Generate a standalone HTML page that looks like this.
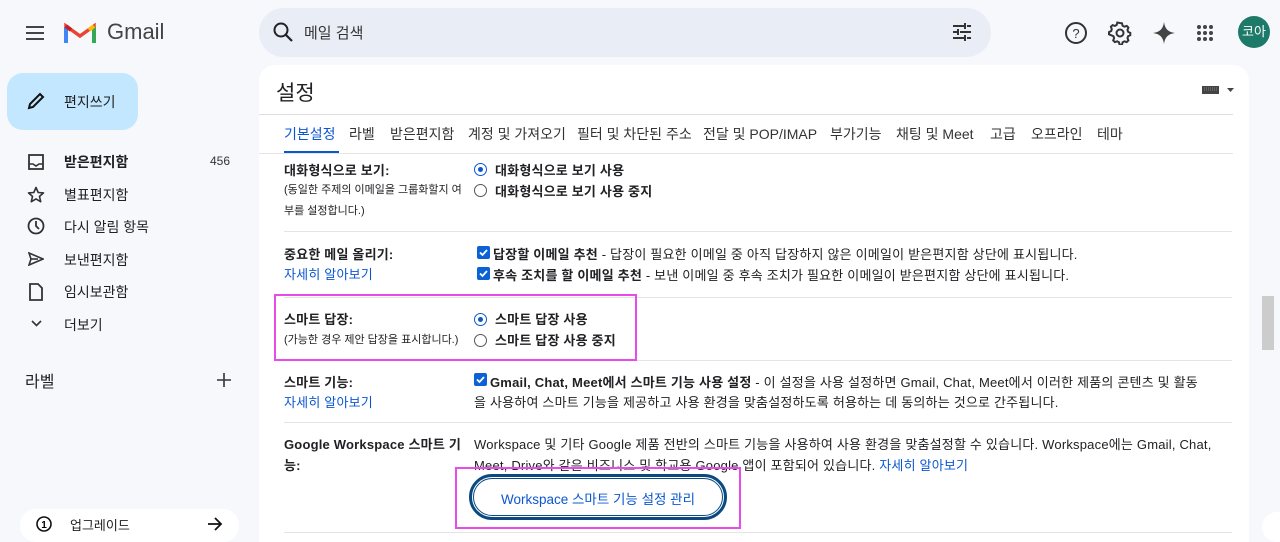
<!DOCTYPE html>
<html><head><meta charset="utf-8"><style>
*{box-sizing:border-box;margin:0;padding:0}
html,body{width:1280px;height:542px;overflow:hidden}
body{background:#f6f8fc;font-family:"Liberation Sans","Noto Sans CJK KR",sans-serif;color:#202124;position:relative}
.a{position:absolute;white-space:nowrap}
.nav{font-size:14px;color:#202124}
.card{position:absolute;left:259px;top:65px;width:990px;height:477px;background:#fff;border-radius:16px 16px 0 0}
.t{font-size:13px;color:#202124;letter-spacing:.2px}
.b{font-weight:bold}
.lnk{color:#0b57d0}
.sep{position:absolute;left:284px;width:948px;height:1px;background:#e4e4e4}
.rad{position:absolute;width:13px;height:13px;border-radius:50%;border:1px solid #555;background:#fff}
.rad.on{border:1.5px solid #0b57d0}
.rad.on::after{content:"";position:absolute;left:2.5px;top:2.5px;width:5px;height:5px;border-radius:50%;background:#0b57d0}
.cb{position:absolute;width:13px;height:13px;border-radius:2px;background:#0b62d6}
.cb svg{position:absolute;left:0;top:0}
.tab{position:absolute;top:124px;font-size:14px;color:#333;white-space:nowrap}
</style></head><body>
<svg class="a" style="left:25px;top:25px" width="20" height="16"><path d="M1 2h18M1 8h18M1 14h18" stroke="#444" stroke-width="2"/></svg>
<svg class="a" style="left:64px;top:21px" width="32" height="24" viewBox="0 0 32 24"><path d="M2 22V5l14 10L30 5v17" fill="none" stroke="#ea4335" stroke-width="3.5"/><path d="M2 22V6" stroke="#4285f4" stroke-width="4"/><path d="M30 22V6" stroke="#34a853" stroke-width="4"/><path d="M2 5l5 4" stroke="#c5221f" stroke-width="4"/><path d="M30 5l-5 4" stroke="#fbbc04" stroke-width="4"/></svg>
<div class="a" style="left:107px;top:19px;font-size:22px;color:#444">Gmail</div>
<div class="a" style="left:259px;top:8px;width:732px;height:49px;border-radius:25px;background:#e9eef6"></div>
<svg class="a" style="left:272px;top:21px" width="22" height="22"><circle cx="9" cy="9" r="6.5" fill="none" stroke="#222" stroke-width="2"/><path d="M14 14l6 6" stroke="#222" stroke-width="2.2"/></svg>
<div class="a" style="left:304px;top:22px;font-size:15px;color:#333">메일 검색</div>
<svg class="a" style="left:952px;top:23px" width="20" height="18"><path d="M1 3h11M15 3h4M13 0v6M1 9h4M8 9h11M6 6v6M1 15h11M15 15h4M13 12v6" stroke="#333" stroke-width="2"/></svg>
<svg class="a" style="left:1064px;top:21px" width="24" height="24"><circle cx="12" cy="12" r="10" fill="none" stroke="#333" stroke-width="2"/><text x="12" y="17" font-size="13" text-anchor="middle" fill="#333" font-family="Liberation Sans">?</text></svg>
<svg class="a" style="left:1108px;top:21px" width="24" height="24" viewBox="0 0 24 24"><path d="M12 2l2 .3.6 2.4 1.8 1 2.3-.8 1.7 1.6-.9 2.4.6 1.9 2.2 1.1v2.2l-2.2 1.1-.6 1.9.9 2.4-1.7 1.6-2.3-.8-1.800 1-.6 2.4h-2.4l-.6-2.4-1.8-1-2.3.8-1.7-1.6.9-2.4-.6-1.9L1 13.3v-2.2l2.2-1.1.6-1.9-.9-2.4 1.7-1.6 2.3.8 1.8-1 .6-2.4z" fill="none" stroke="#333" stroke-width="2"/><circle cx="12" cy="12" r="3.5" fill="none" stroke="#333" stroke-width="2"/></svg>
<svg class="a" style="left:1152px;top:21px" width="24" height="24"><path d="M12 1C13 8 16 11 23 12 16 13 13 16 12 23 11 16 8 13 1 12 8 11 11 8 12 1z" fill="#444"/></svg>
<svg class="a" style="left:1196px;top:24px" width="18" height="18"><g fill="#444"><circle cx="3" cy="3" r="2"/><circle cx="9" cy="3" r="2"/><circle cx="15" cy="3" r="2"/><circle cx="3" cy="9" r="2"/><circle cx="9" cy="9" r="2"/><circle cx="15" cy="9" r="2"/><circle cx="3" cy="15" r="2"/><circle cx="9" cy="15" r="2"/><circle cx="15" cy="15" r="2"/></g></svg>
<div class="a" style="left:1238px;top:16px;width:32px;height:32px;border-radius:50%;background:#1e7a68;color:#fff;font-size:13px;text-align:center;line-height:32px">코아</div>
<div class="a" style="left:7px;top:73px;width:131px;height:57px;border-radius:16px;background:#c2e7ff"></div>
<svg class="a" style="left:26px;top:91px" width="20" height="20"><path d="M3 17l1-4L14 3l3 3L7 16z" fill="none" stroke="#111" stroke-width="2"/></svg>
<div class="a nav" style="left:64px;top:92px">편지쓰기</div>
<svg class="a" style="left:28px;top:154px" width="16" height="16"><rect x="1" y="1" width="14" height="14" fill="none" stroke="#333" stroke-width="1.8"/><path d="M1 10h4l3 2 3-2h4" fill="none" stroke="#333" stroke-width="1.6"/></svg>
<div class="a nav b" style="left:64px;top:152px">받은편지함</div>
<div class="a" style="left:210px;top:154px;font-size:12px;color:#333">456</div>
<svg class="a" style="left:27px;top:186px" width="18" height="18" viewBox="0 0 18 18"><path d="M9 1.5l2.2 5 5.3.4-4 3.5 1.2 5.3L9 12.9l-4.7 2.8 1.2-5.3-4-3.5 5.3-.4z" fill="none" stroke="#333" stroke-width="1.6" stroke-linejoin="round"/></svg>
<div class="a nav" style="left:64px;top:185px">별표편지함</div>
<svg class="a" style="left:27px;top:217px" width="18" height="18"><circle cx="9" cy="9" r="7.5" fill="none" stroke="#333" stroke-width="1.8"/><path d="M9 4v5l3 3" fill="none" stroke="#333" stroke-width="1.8"/></svg>
<div class="a nav" style="left:64px;top:217px">다시 알림 항목</div>
<svg class="a" style="left:28px;top:252px" width="16" height="14"><path d="M1 1l14 6-14 6 2-6z" fill="none" stroke="#333" stroke-width="1.6"/><path d="M3 7h7" stroke="#333" stroke-width="1.6"/></svg>
<div class="a nav" style="left:64px;top:250px">보낸편지함</div>
<svg class="a" style="left:29px;top:283px" width="14" height="18"><path d="M1 1h8l4 4v12H1z" fill="none" stroke="#333" stroke-width="1.8"/></svg>
<div class="a nav" style="left:64px;top:282px">임시보관함</div>
<svg class="a" style="left:31px;top:320px" width="11" height="8"><path d="M1 1l4.5 4.5L10 1" fill="none" stroke="#333" stroke-width="1.6"/></svg>
<div class="a nav" style="left:64px;top:315px">더보기</div>
<div class="a" style="left:25px;top:368px;font-size:16px;color:#202124">라벨</div>
<svg class="a" style="left:217px;top:373px" width="14" height="14"><path d="M7 0v14M0 7h14" stroke="#333" stroke-width="1.6"/></svg>
<div class="a" style="left:20px;top:509px;width:219px;height:33px;border-radius:16px;background:#fff"></div>
<svg class="a" style="left:36px;top:516px" width="16" height="16"><circle cx="8" cy="8" r="7" fill="none" stroke="#111" stroke-width="1.6"/><text x="8" y="12" font-size="10" text-anchor="middle" font-weight="bold" font-family="Liberation Sans">1</text></svg>
<div class="a" style="left:70px;top:515px;font-size:13px">업그레이드</div>
<svg class="a" style="left:207px;top:517px" width="16" height="14"><path d="M1 7h13M8 1l6 6-6 6" fill="none" stroke="#111" stroke-width="1.8"/></svg>
<div class="card"></div>
<div class="a" style="left:276px;top:77px;font-size:21px;color:#202124">설정</div>
<svg class="a" style="left:1202px;top:85px" width="34" height="10"><rect x="0" y="1" width="17" height="8" fill="#444"/><path d="M2 3h13M2 5h13" stroke="#bbb" stroke-width=".6" stroke-dasharray="1 1"/><path d="M25 3h7l-3.5 4z" fill="#444"/></svg>
<div class="a" style="left:259px;top:114px;width:974px;height:1px;background:#e0e0e0"></div>
<div class="tab" style="left:284px;color:#0b57d0">기본설정</div>
<div class="tab" style="left:349px">라벨</div>
<div class="tab" style="left:390px">받은편지함</div>
<div class="tab" style="left:468px">계정 및 가져오기</div>
<div class="tab" style="left:577px">필터 및 차단된 주소</div>
<div class="tab" style="left:703px">전달 및 POP/IMAP</div>
<div class="tab" style="left:830px">부가기능</div>
<div class="tab" style="left:896px">채팅 및 Meet</div>
<div class="tab" style="left:990px">고급</div>
<div class="tab" style="left:1031px">오프라인</div>
<div class="tab" style="left:1097px">테마</div>
<div class="a" style="left:284px;top:151px;width:55px;height:3px;background:#0b57d0"></div>
<div class="a" style="left:259px;top:153px;width:974px;height:1px;background:#e4e4e4"></div>

<div class="a t b" style="left:284px;top:160px">대화형식으로 보기:</div>
<div class="a" style="left:284px;top:181px;font-size:11px">(동일한 주제의 이메일을 그룹화할지 여</div>
<div class="a" style="left:284px;top:202px;font-size:11px">부를 설정합니다.)</div>
<div class="rad on" style="left:474px;top:163px"></div><div class="a t b" style="left:495px;top:160px">대화형식으로 보기 사용</div>
<div class="rad" style="left:474px;top:184px"></div><div class="a t b" style="left:495px;top:181px">대화형식으로 보기 사용 중지</div>
<div class="sep" style="top:231px"></div>

<div class="a t b" style="left:284px;top:244px">중요한 메일 올리기:</div>
<div class="a t lnk" style="left:284px;top:264px">자세히 알아보기</div>
<div class="cb" style="left:477px;top:246px"><svg width="13" height="13"><path d="M3 6.5l2.5 2.5L10 4" fill="none" stroke="#fff" stroke-width="1.8"/></svg></div>
<div class="a t" style="left:493px;top:244px"><b>답장할 이메일 추천</b> - 답장이 필요한 이메일 중 아직 답장하지 않은 이메일이 받은편지함 상단에 표시됩니다.</div>
<div class="cb" style="left:477px;top:267px"><svg width="13" height="13"><path d="M3 6.5l2.5 2.5L10 4" fill="none" stroke="#fff" stroke-width="1.8"/></svg></div>
<div class="a t" style="left:493px;top:265px"><b>후속 조치를 할 이메일 추천</b> - 보낸 이메일 중 후속 조치가 필요한 이메일이 받은편지함 상단에 표시됩니다.</div>
<div class="sep" style="top:297px"></div>

<div class="a t b" style="left:284px;top:309px">스마트 답장:</div>
<div class="a" style="left:284px;top:331px;font-size:11px">(가능한 경우 제안 답장을 표시합니다.)</div>
<div class="rad on" style="left:474px;top:313px"></div><div class="a t b" style="left:495px;top:309px">스마트 답장 사용</div>
<div class="rad" style="left:474px;top:334px"></div><div class="a t b" style="left:495px;top:330px">스마트 답장 사용 중지</div>
<div class="sep" style="top:360px"></div>

<div class="a t b" style="left:284px;top:372px">스마트 기능:</div>
<div class="a t lnk" style="left:284px;top:392px">자세히 알아보기</div>
<div class="cb" style="left:474px;top:373px"><svg width="13" height="13"><path d="M3 6.5l2.5 2.5L10 4" fill="none" stroke="#fff" stroke-width="1.8"/></svg></div>
<div class="a t" style="left:490px;top:372px"><b>Gmail, Chat, Meet에서 스마트 기능 사용 설정</b> - 이 설정을 사용 설정하면 Gmail, Chat, Meet에서 이러한 제품의 콘텐츠 및 활동</div>
<div class="a t" style="left:474px;top:392px">을 사용하여 스마트 기능을 제공하고 사용 환경을 맞춤설정하도록 허용하는 데 동의하는 것으로 간주됩니다.</div>
<div class="sep" style="top:422px"></div>

<div class="a t b" style="left:284px;top:434px">Google Workspace 스마트 기</div>
<div class="a t b" style="left:284px;top:455px">능:</div>
<div class="a t" style="left:474px;top:434px">Workspace 및 기타 Google 제품 전반의 스마트 기능을 사용하여 사용 환경을 맞춤설정할 수 있습니다. Workspace에는 Gmail, Chat,</div>
<div class="a t" style="left:474px;top:455px">Meet, Drive와 같은 비즈니스 및 학교용 Google 앱이 포함되어 있습니다. <span class="lnk">자세히 알아보기</span></div>
<div class="a" style="left:469px;top:474px;width:258px;height:46px;border-radius:23px;border:3px solid #0b4a80;background:#fff"></div>
<div class="a" style="left:473px;top:478px;width:250px;height:38px;border-radius:19px;border:1px solid #0b4a80"></div>
<div class="a" style="left:469px;top:488px;width:258px;text-align:center;font-size:13.5px;color:#0b57d0">Workspace 스마트 기능 설정 관리</div>
<div class="sep" style="top:532px"></div>

<div class="a" style="left:274px;top:294px;width:363px;height:67px;border:2px solid #e84ce8"></div>
<div class="a" style="left:455px;top:467px;width:286px;height:62px;border:2px solid #e84ce8"></div>

<div class="a" style="left:1262px;top:296px;width:12px;height:54px;background:#ccc"></div>
<div class="a" style="left:1262px;top:512px;width:18px;height:30px;border-radius:15px 0 0 15px;background:#fff"></div>
</body></html>
